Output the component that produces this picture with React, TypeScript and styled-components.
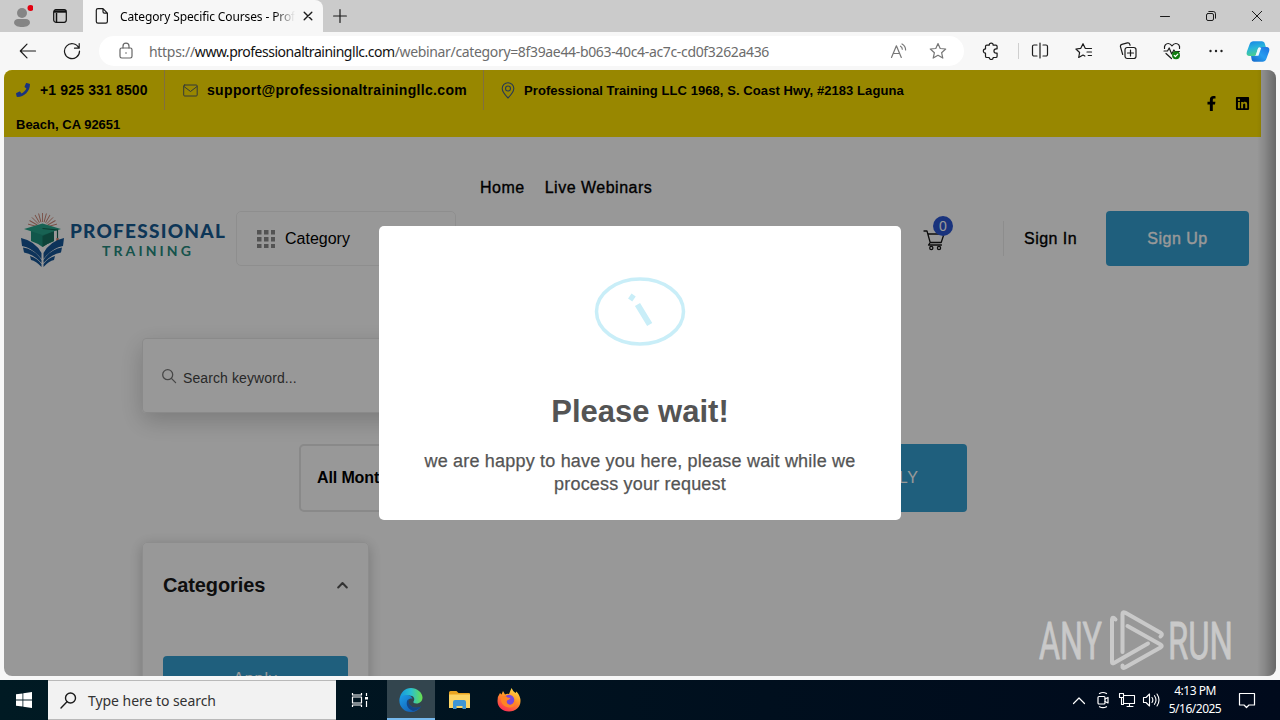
import React from "react";
import styled, { createGlobalStyle } from "styled-components";
import { FaPhone, FaFacebookF, FaLinkedin } from "react-icons/fa";

const uiFont = `"Noto Sans", "Open Sans", sans-serif`;
const pageFont = `"Liberation Sans", Arial, sans-serif`;

const GlobalStyle = createGlobalStyle`
	* {
		box-sizing: border-box;
	}
	body {
		margin: 0;
		overflow: hidden;
		font-family: ${pageFont};
	}
	svg {
		display: block;
		flex: none;
	}
`;

const Desktop = styled.div`
	width: 1280px;
	height: 720px;
	position: relative;
	display: flex;
	flex-direction: column;
	background: #f7f7f7;
	overflow: hidden;
	white-space: nowrap;
`;

type LabelProps = { $size?: number; $spacing?: number; $color?: string; $weight?: number };
const Label = styled.span<LabelProps>`
	font-size: ${({ $size = 16 }) => $size}px;
	letter-spacing: ${({ $spacing = 0 }) => $spacing}px;
	color: ${({ $color = "#000" }) => $color};
	font-weight: ${({ $weight = 400 }) => $weight};
`;
const MediumLabel = styled(Label)`
	-webkit-text-stroke: 0.35px currentColor;
`;

/* ---------- browser chrome ---------- */
const TabStrip = styled.div`
	height: 32px;
	flex: none;
	display: flex;
	padding-left: 3px;
	background: #cbcbcb;
`;
const Cell = styled.div<{ $width: number }>`
	width: ${({ $width }) => $width}px;
	flex: none;
	display: flex;
	align-items: center;
	justify-content: center;
`;
const Tab = styled.div`
	width: 240px;
	margin-left: 4px;
	padding: 0 10px 0 12px;
	display: flex;
	align-items: center;
	background: #f7f7f7;
	border-radius: 0 8px 0 0;
`;
const TabTitle = styled.div`
	width: 175px;
	margin: 0 8px 0 11px;
	font-family: ${uiFont};
	line-height: 20px;
	mask-image: linear-gradient(to right, #000 154px, transparent 175px);
`;
const WindowButtons = styled.div`
	display: flex;
	margin-left: auto;
`;
const Toolbar = styled.div`
	height: 38px;
	flex: none;
	padding-left: 6px;
	display: flex;
`;
const AddressBar = styled.div`
	width: 865px;
	height: 30px;
	margin: 4px 0 0 5px;
	padding: 0 6px 0 13px;
	display: flex;
	align-items: center;
	background: #fff;
	border-radius: 15px;
	font-family: ${uiFont};
`;
const Url = styled.div`
	flex: 1;
	margin-left: 9px;
	line-height: 20px;
`;
const ToolDivider = styled.i`
	width: 1px;
	height: 16px;
	margin: 11px -1px 0 0;
	background: #cfcfcf;
`;

/* ---------- web page ---------- */
const Viewport = styled.div`
	width: 1272px;
	height: 606px;
	flex: none;
	margin-left: 4px;
	position: relative;
	overflow: hidden;
	background: #fefefe;
	border-radius: 8px;
`;
const TopBar = styled.div`
	width: 1257px;
	height: 67px;
	padding-left: 12px;
	display: flex;
	justify-content: space-between;
	background: #fde100;
`;
const ContactRow = styled.div`
	height: 40px;
	display: flex;
	align-items: center;
`;
const Contact = styled.div<{ $width: number; $gap: number; $indent?: number }>`
	width: ${({ $width }) => $width}px;
	height: 40px;
	padding-left: ${({ $indent = 0 }) => $indent}px;
	display: flex;
	align-items: center;
	gap: ${({ $gap }) => $gap}px;
	border-right: 1px solid #d8b96a;

	&:last-child {
		border-right: 0;
	}
`;
const AddressRest = styled.div`
	line-height: 28px;
`;
const Social = styled.div`
	display: flex;
	align-items: center;
	gap: 16px;
	padding-right: 11px;
`;
const Header = styled.header`
	width: 1257px;
	height: 143px;
	margin-top: 30px;
	padding: 0 12px 0 16px;
	display: flex;
	align-items: center;
`;
const Brand = styled.div`
	width: 216px;
	display: flex;
	align-items: center;
`;
const BrandName = styled.div`
	width: 158px;
	margin: 5px 0 0 4px;
	display: flex;
	flex-direction: column;
	align-items: center;
	font-family: Lato, sans-serif;
	line-height: 20px;
`;
const CategoryBox = styled.div`
	width: 220px;
	height: 55px;
	padding-left: 20px;
	display: flex;
	align-items: center;
	gap: 10px;
	border: 1px solid #ededed;
	border-radius: 5px;
`;
const Nav = styled.nav`
	align-self: flex-start;
	margin-left: 24px;
	display: flex;
	gap: 20px;
	line-height: 42px;
`;
const Actions = styled.div`
	margin-left: auto;
	display: flex;
	align-items: center;
`;
const Cart = styled.div`
	width: 81px;
	position: relative;
	border-right: 1px solid #ececec;
	padding: 8px 0 5px;
`;
const CartCount = styled.span`
	position: absolute;
	left: 10px;
	top: -5px;
	width: 20px;
	height: 20px;
	border-radius: 50%;
	background: #2b55d0;
	color: #fff;
	font-size: 14px;
	line-height: 21px;
	text-align: center;
`;
const BlueButton = styled.div<{ $width: number; $height: number }>`
	width: ${({ $width }) => $width}px;
	height: ${({ $height }) => $height}px;
	display: flex;
	align-items: center;
	justify-content: center;
	background: #359fd0;
	border-radius: 4px;
`;
const Main = styled.main`
	padding: 28px 0 0 138px;
`;
const SearchBox = styled.div`
	width: 660px;
	height: 75px;
	padding: 3px 0 0 18px;
	display: flex;
	align-items: center;
	gap: 6px;
	border: 1px solid #e6e6e6;
	border-radius: 4px;
	box-shadow: 0 8px 24px rgba(0, 0, 0, 0.2);
`;
const SearchHint = styled(Label)`
	padding-top: 2px;
`;
const FilterRow = styled.div`
	width: 667px;
	margin: 31px 0 31px 158px;
	display: flex;
	justify-content: space-between;
`;
const MonthSelect = styled.div`
	width: 240px;
	height: 68px;
	margin-left: -1px;
	padding-left: 16px;
	display: flex;
	align-items: center;
	border: 2px solid #e4e4e4;
	border-radius: 5px;
`;
const FilterCard = styled.div`
	width: 227px;
	height: 220px;
	margin-top: -1px;
	padding: 24px 20px 0;
	border: 1px solid #ececec;
	border-radius: 5px;
	box-shadow: 0 3px 14px rgba(0, 0, 0, 0.22);
`;
const CardTitle = styled.div`
	height: 36px;
	margin-bottom: 53px;
	display: flex;
	align-items: center;
	justify-content: space-between;
`;
const ScrollEdge = styled.div`
	position: absolute;
	right: 0;
	top: 0;
	bottom: 0;
	width: 19px;
	background: linear-gradient(to right, transparent, rgba(0, 0, 0, 0.1) 40%, rgba(0, 0, 0, 0.32));
`;
const Backdrop = styled.div`
	position: absolute;
	inset: 0;
	display: flex;
	align-items: center;
	justify-content: center;
	background: rgba(0, 0, 0, 0.4);
`;
const Modal = styled.div`
	width: 522px;
	height: 294px;
	padding-top: 49px;
	display: flex;
	flex-direction: column;
	align-items: center;
	background: #fff;
	border-radius: 5px;
`;
const ModalTitle = styled.h2`
	margin: 47px 0 20px;
	font-size: 31px;
	line-height: 36px;
	letter-spacing: 0;
	color: #545454;
`;
const ModalText = styled.p`
	margin: 0;
	font-size: 18px;
	line-height: 22.5px;
	letter-spacing: 0.19px;
	color: #545454;
	text-align: center;
	-webkit-text-stroke: 0.25px currentColor;
`;

/* ---------- overlay and taskbar ---------- */
const Watermark = styled.div`
	position: absolute;
	left: 1036px;
	top: 606px;
`;
const Taskbar = styled.div`
	height: 40px;
	margin-top: 4px;
	flex: none;
	display: flex;
	background: linear-gradient(to right, #001a23, #000f1e 60%, #000a1c);
`;
const TaskSearch = styled.div`
	width: 288px;
	padding-left: 12px;
	display: flex;
	align-items: center;
	gap: 11px;
	background: #f2f2f2;
	border: 1px solid #b9b9b9;
	border-width: 1px 0;
	font-family: ${uiFont};
`;
const ActiveApp = styled(Cell)`
	margin-left: 3px;
	background: #33454e;
	border-bottom: 2px solid #76b9ed;
	padding-top: 2px;
`;
const Tray = styled.div`
	margin-left: auto;
	display: flex;
	align-items: center;
	padding-right: 17px;
`;
const Clock = styled.div`
	width: 72px;
	margin-left: -4px;
	font-family: ${uiFont};
	font-size: 12px;
	line-height: 18px;
	letter-spacing: -0.5px;
	color: #fff;
	text-align: center;
`;

type IconProps = {
	size?: number;
	width?: number;
	height?: number;
	color?: string;
	stroke?: number;
	children: React.ReactNode;
};
const Icon = ({ size = 18, width, height, color = "#1b1b1b", stroke = 1.2, children }: IconProps) => (
	<svg
		width={width ?? size}
		height={height ?? size}
		viewBox={`0 0 ${width ?? size} ${height ?? size}`}
		fill="none"
		stroke={color}
		strokeWidth={stroke}
		strokeLinecap="round"
		strokeLinejoin="round"
	>
		{children}
	</svg>
);

const BrowserTabs = () => (
	<TabStrip>
		<Cell $width={38}>
			<Icon width={22} height={26}>
				<g stroke="none">
					<circle cx="11" cy="10" r="5" fill="#858585" />
					<path d="M3 20c0-3 2-4 4-4h8c2 0 4 1 4 4-1 3-4 4-8 4s-7-1-8-4z" fill="#858585" />
					<circle cx="19.5" cy="5" r="3" fill="#e3000f" />
				</g>
			</Icon>
		</Cell>
		<Cell $width={38}>
			<Icon width={16} height={16} color="#111">
				<rect x="1.7" y="1.7" width="12.6" height="12.6" rx="2.2" />
				<path d="M2 3.5h12" strokeWidth="2.4" strokeLinecap="butt" />
				<path d="M4.500 5v9" strokeWidth="1.5" strokeLinecap="butt" />
			</Icon>
		</Cell>
		<Tab>
			<Icon width={14} height={18}>
				<path d="M3 1.6h5l4.4 4.6v8.3a1.7 1.7 0 0 1-1.7 1.7H3a1.7 1.7 0 0 1-1.7-1.7V3.3A1.7 1.7 0 0 1 3 1.6zM8 1.8v3a1.4 1.4 0 0 0 1.4 1.4h2.8" />
			</Icon>
			<TabTitle>
				<Label $size={12} $spacing={-0.12}>
					Category Specific Courses - Prof
				</Label>
			</TabTitle>
			<Icon size={10} stroke={1.4}>
				<path d="M1.2 1.2l7.6 7.6M8.8 1.2L1.2 8.8" />
			</Icon>
		</Tab>
		<Cell $width={34}>
			<Icon size={14}>
				<path d="M7 .6v12.8M.6 7h12.8" />
			</Icon>
		</Cell>
		<WindowButtons>
			<Cell $width={46}>
				<Icon size={12}>
					<path d="M1.5 6.5h9" strokeWidth="1" />
				</Icon>
			</Cell>
			<Cell $width={46}>
				<Icon size={12} stroke={1}>
					<rect x="1.5" y="3.5" width="7" height="7" rx="1.5" />
					<path d="M3.8 1.5h4.4a2.3 2.3 0 0 1 2.3 2.3v4.4" />
				</Icon>
			</Cell>
			<Cell $width={46}>
				<Icon size={12} stroke={1}>
					<path d="M1.3 1.3l9.4 9.4M10.7 1.3l-9.4 9.4" />
				</Icon>
			</Cell>
		</WindowButtons>
	</TabStrip>
);

const BrowserToolbar = () => (
	<Toolbar>
		<Cell $width={44}>
			<Icon>
				<path d="M16.5 9H1.5M8 2.2L1.3 9 8 15.8" />
			</Icon>
		</Cell>
		<Cell $width={44}>
			<Icon>
				<path d="M15.8 6A7.5 7.5 0 1 0 16.5 9M16.2 1.5v4.7h-4.7" />
			</Icon>
		</Cell>
		<AddressBar>
			<Cell $width={28}>
				<Icon width={14} height={18} color="#666">
					<rect x="1" y="6" width="12" height="10" rx="1.7" />
					<path d="M4 6V4.2a3 3 0 0 1 6 0V6" />
					<circle cx="7" cy="11" r=".8" fill="#666" stroke="none" />
				</Icon>
			</Cell>
			<Url>
				<Label $size={14} $spacing={-0.3} $color="#6c6c6c">
					https://
				</Label>
				<Label $size={14} $spacing={-0.48} $color="#111">
					www.professionaltrainingllc.com
				</Label>
				<Label $size={14} $spacing={-0.34} $color="#6c6c6c">
					/webinar/category=8f39ae44-b063-40c4-ac7c-cd0f3262a436
				</Label>
			</Url>
			<Cell $width={40}>
				<Icon width={18} height={16} color="#777">
					<path d="M2.5 14.5L7.4 2.8l4.9 11.7M4.2 10.5h6.4M11.5 3.2q1.8 1 1.8 3M13 1q3.600 2 3.600 6" />
				</Icon>
			</Cell>
			<Cell $width={40}>
				<Icon color="#777">
					<path d="M9 1.5l2.2 5 5.5.5-4.1 3.7 1.2 5.4L9 13.3l-4.8 2.8 1.2-5.4L1.3 7l5.5-.5z" />
				</Icon>
			</Cell>
		</AddressBar>
		<Cell $width={54}>
			<Icon>
				<path d="M4.8 3.2h2.4a2 2 0 0 1 4 0h2.6a1.3 1.3 0 0 1 1.3 1.3v2.3h-1a2.1 2.1 0 0 0 0 4.3h1v3.1a1.3 1.3 0 0 1-1.3 1.3h-2.6a2 2 0 0 1-4 0H4.8a1.3 1.3 0 0 1-1.3-1.3v-3a2.1 2.1 0 0 1 0-4.3V4.5a1.3 1.3 0 0 1 1.3-1.3z" />
			</Icon>
		</Cell>
		<ToolDivider />
		<Cell $width={44}>
			<Icon>
				<path d="M6 3H3a1.5 1.5 0 0 0-1.5 1.5v8A1.5 1.5 0 0 0 3 14h3M12 3h3a1.5 1.5 0 0 1 1.5 1.5v8A1.5 1.5 0 0 1 15 14h-3M9 1v15" />
			</Icon>
		</Cell>
		<Cell $width={44}>
			<Icon>
				<path d="M10.6 6.5H16.5M12 10h4.5M13.2 13.5h3.3M10.2 6.2L8 1.7 5.8 6.3.9 7l3.7 3.5-.9 5 4.3-2.4 1.8 1" />
			</Icon>
		</Cell>
		<Cell $width={44}>
			<Icon>
				<rect x="6" y="5.5" width="11" height="11" rx="2.2" />
				<path d="M11.5 8v6M8.5 11h6M3.7 12.5L1.500 4.800a2 2 0 0 1 1.400-2.400l5.500-1.500a2 2 0 0 1 2.400 1.400l.3 1" />
			</Icon>
		</Cell>
		<Cell $width={44}>
			<Icon>
				<path d="M1.5 6.5C1 3.5 3 1.5 5.2 1.5 7 1.5 8 2.5 9 3.8c1-1.3 2-2.3 3.8-2.3 2.4 0 4.4 2.2 3.7 5M1 9h3.5l1.700-3 2.500 6 2.200-4 1 1.500h4.500M3 11.500l5.500 5" />
				<circle cx="13" cy="13.200" r="4" fill="#107c10" stroke="none" />
				<path d="M11.200 13.300l1.200 1.200 2.400-2.400" stroke="#fff" />
			</Icon>
		</Cell>
		<Cell $width={44}>
			<Icon>
				<g fill="#222" stroke="none">
					<circle cx="3.5" cy="9" r="1.2" />
					<circle cx="9" cy="9" r="1.2" />
					<circle cx="14.5" cy="9" r="1.2" />
				</g>
			</Icon>
		</Cell>
		<Cell $width={40}>
			<svg width="24" height="23" viewBox="0 0 26 24">
				<defs>
					<linearGradient id="copilotLeft" x1="0" y1="0" x2="0.3" y2="1">
						<stop offset="0" stopColor="#1683e8" />
						<stop offset=".5" stopColor="#27b3dc" />
						<stop offset="1" stopColor="#4bcf8d" />
					</linearGradient>
					<linearGradient id="copilotRight" x1="1" y1="0" x2="0" y2="1">
						<stop offset="0" stopColor="#1b6fe0" />
						<stop offset=".5" stopColor="#279df0" />
						<stop offset="1" stopColor="#1466c7" />
					</linearGradient>
				</defs>
				<path d="M8 1h9c2 0 3 1 3.500 3l1 3H16c-2 0-3 1-3.500 3l-1.500 5c-.5 1.500-1.500 2-3 2H4c-3 0-4-2-3-5L4 4c.8-2 2-3 4-3z" fill="url(#copilotLeft)" />
				<path d="M18 23H9c-2 0-2.500-1-3-3l-.5-3H9c2 0 3-1 3.500-3L14 9c.5-1.500 1.500-2 3-2h5c3 0 4 2 3 5l-3 8c-.8 2-2 3-4 3z" fill="url(#copilotRight)" />
				<path d="M13.500 8h3l-3 8.500h-3z" fill="#eefaff" />
			</svg>
		</Cell>
	</Toolbar>
);

const rays = [-75, -60, -45, -30, -15, 0, 15, 30, 45, 60, 75];

const BrandLogo = () => (
	<svg width="45" height="56" viewBox="0 0 45 56">
		{rays.map((angle) => (
			<path key={angle} d="M22.5 11V2" stroke="#c98272" strokeWidth=".9" transform={`rotate(${angle} 22.5 17)`} />
		))}
		<path d="M11 19h23v11q-5 2-11.500 6Q17 32 11 30z" fill="#1f917d" />
		<path d="M22.5 25v11q6-4 11.500-6V20z" fill="#17705f" />
		<path d="M4 18l18.500-5.500L41 18l-18.500 6z" fill="#28a48a" />
		<path d="M22.5 17.500L37.500 19v9" stroke="#14604f" strokeWidth="1.2" fill="none" />
		<path d="M36.500 27h2l.5 5h-3z" fill="#cf7f62" />
		<g fill="#165696">
			<path d="M1 27q14 3 20.500 15v6Q13 37 2 35z" />
			<path d="M3 36.500q12 2 18.500 12.500v3Q13 43 4 41.500z" />
			<path d="M10 45q7 2 11.500 8v3Q16 50 11 49z" />
			<path d="M44 27q-14 3-20.500 15v6Q32 37 43 35z" />
			<path d="M42 36.500q-12 2-18.500 12.500v3Q32 43 41 41.500z" />
			<path d="M35 45q-7 2-11.500 8v3Q29 50 34 49z" />
		</g>
	</svg>
);

const WebPage = () => (
	<Viewport>
		<TopBar>
			<div>
				<ContactRow>
					<Contact $width={149} $gap={10}>
						<FaPhone size={14} color="#2b55d0" />
						<Label $size={14} $weight={700} $spacing={0.15}>
							+1 925 331 8500
						</Label>
					</Contact>
					<Contact $width={319} $gap={9} $indent={18}>
						<Icon width={15} height={13} color="#555f60" stroke={1}>
							<rect x=".7" y="1" width="13.5" height="11" rx="1" />
							<path d="M1 2.5l6.5 5 6.500-5" />
						</Icon>
						<Label $size={14} $weight={700} $spacing={0.33}>
							support@professionaltrainingllc.com
						</Label>
					</Contact>
					<Contact $width={440} $gap={9} $indent={17}>
						<Icon width={14} height={17} color="#45608a" stroke={1.1}>
							<path d="M7 16Q1.2 10 1.2 6.5a5.8 5.8 0 0 1 11.6 0Q12.8 10 7 16z" />
							<circle cx="7" cy="6.5" r="2.5" />
						</Icon>
						<Label $size={13} $weight={700} $spacing={0.075}>
							Professional Training LLC 1968, S. Coast Hwy, #2183 Laguna
						</Label>
					</Contact>
				</ContactRow>
				<AddressRest>
					<Label $size={13} $weight={700} $spacing={0}>
						Beach, CA 92651
					</Label>
				</AddressRest>
			</div>
			<Social>
				<FaFacebookF size={15} />
				<FaLinkedin size={15} />
			</Social>
		</TopBar>
		<Header>
			<Brand>
				<BrandLogo />
				<BrandName>
					<Label $size={19} $weight={900} $spacing={1.25} $color="#175a92">
						PROFESSIONAL
					</Label>
					<Label $size={14} $weight={700} $spacing={3.1} $color="#268a7e">
						TRAINING
					</Label>
				</BrandName>
			</Brand>
			<CategoryBox>
				<svg width="18" height="18" viewBox="0 0 18 18" fill="#8a8a8a">
					{[0, 7, 14].map((y) => [0, 7, 14].map((x) => <rect key={`${x}-${y}`} x={x} y={y} width="4.5" height="4.5" />))}
				</svg>
				<Label $size={16}>Category</Label>
			</CategoryBox>
			<Nav>
				<MediumLabel $size={16} $spacing={0.5}>
					Home
				</MediumLabel>
				<MediumLabel $size={16} $spacing={0.5}>
					Live Webinars
				</MediumLabel>
			</Nav>
			<Actions>
				<Cart>
					<Icon width={22} height={22} color="#161616" stroke={1.3}>
						<path d="M1 2h3l3.2 11.5h11L21 5H5.500M7.200 13.500L5.500 16H18.500" />
						<circle cx="8.3" cy="19" r="1.6" />
						<circle cx="16" cy="19" r="1.6" />
					</Icon>
					<CartCount>0</CartCount>
				</Cart>
				<Cell $width={93}>
					<MediumLabel $size={16} $spacing={0.45}>
						Sign In
					</MediumLabel>
				</Cell>
				<Cell $width={9} />
				<BlueButton $width={143} $height={55}>
					<MediumLabel $size={16} $spacing={0.5} $color="#fff">
						Sign Up
					</MediumLabel>
				</BlueButton>
			</Actions>
		</Header>
		<Main>
			<SearchBox>
				<Icon size={16} color="#777" stroke={1.3}>
					<circle cx="6.7" cy="5.700" r="5" />
					<path d="M10.400 9.400l4.200 4.200" />
				</Icon>
				<SearchHint $size={14} $color="#444" $spacing={0.1}>
					Search keyword...
				</SearchHint>
			</SearchBox>
			<FilterRow>
				<MonthSelect>
					<Label $size={16} $weight={700} $spacing={-0.12}>
						All Months
					</Label>
				</MonthSelect>
				<BlueButton $width={151} $height={68}>
					<Label $size={16} $spacing={0.8} $color="#fff">
						APPLY
					</Label>
				</BlueButton>
			</FilterRow>
			<FilterCard>
				<CardTitle>
					<Label $size={20} $weight={700} $spacing={-0.12} $color="#181818">
						Categories
					</Label>
					<Icon width={11} height={8} color="#555" stroke={2}>
						<path d="M1.2 6.500L5.500 2l4.300 4.500" />
					</Icon>
				</CardTitle>
				<BlueButton $width={185} $height={46}>
					<Label $size={16} $spacing={0.9} $color="#fff">
						Apply
					</Label>
				</BlueButton>
			</FilterCard>
		</Main>
		<ScrollEdge />
		<Backdrop>
			<Modal>
				<svg width="94" height="72" viewBox="0 0 94 72" fill="none" stroke="#c9eef8">
					<ellipse cx="47" cy="36.5" rx="43.5" ry="32.5" strokeWidth="3.5" />
					<path d="M36.8 21l4.2 3M44.5 29.5l12.2 20" strokeWidth="6" />
				</svg>
				<ModalTitle>Please wait!</ModalTitle>
				<ModalText>
					we are happy to have you here, please wait while we
					<br />
					process your request
				</ModalText>
			</Modal>
		</Backdrop>
	</Viewport>
);

const WindowsTaskbar = () => (
	<Taskbar>
		<Cell $width={48}>
			<svg width="16" height="16" viewBox="0 0 16 16" fill="#fff">
				<path d="M0 2.3L6.5 1.4v6.2H0zM7.3 1.3L16 0v7.6H7.3zM0 8.4h6.5v6.2L0 13.7zM7.3 8.4H16V16l-8.7-1.3z" />
			</svg>
		</Cell>
		<TaskSearch>
			<Icon size={17} stroke={1.4}>
				<circle cx="10.5" cy="6" r="5" />
				<path d="M7 9.8L1 16" />
			</Icon>
			<Label $size={14} $color="#333" $spacing={-0.05}>
				Type here to search
			</Label>
		</TaskSearch>
		<Cell $width={48}>
			<Icon width={18} height={16} color="#fff" stroke={1.2}>
				<path d="M1.5 1v2h9V1M1.5 15v-2h9v2M1.5 5h9v6h-9zM15.5 1v3M15.5 9v6" strokeLinecap="butt" />
				<path d="M14 5h3v2.5h-3z" fill="#fff" stroke="none" />
			</Icon>
		</Cell>
		<ActiveApp $width={48}>
			<svg width="24" height="24" viewBox="0 0 24 24">
				<defs>
					<linearGradient id="edgeTop" x1="0" y1=".5" x2="1" y2=".5">
						<stop offset="0" stopColor="#1496dc" />
						<stop offset=".5" stopColor="#2bc0cf" />
						<stop offset="1" stopColor="#69e04c" />
					</linearGradient>
					<linearGradient id="edgeBody" x1="0" y1="0" x2="1" y2="1">
						<stop offset="0" stopColor="#1b9de8" />
						<stop offset="1" stopColor="#1251a8" />
					</linearGradient>
				</defs>
				<path d="M.5 11C1.500 4.500 6 0 12 0s11.500 4.500 11.500 9.500c0 3.500-2.500 6-6 6-2.500 0-3.500-1-3-2 2-3 0-6-4-6-4.500 0-8 1-10 3.500z" fill="url(#edgeTop)" />
				<path d="M.5 11c1.500-3 4.500-4.500 7.500-4 3 .3 5 2 5.500 4-4-2-6 3-3 6 3 3.500 8 3.500 11.500 1.500-2 3.500-5.500 5.500-10 5.500C5 24-.500 18 .500 11z" fill="url(#edgeBody)" />
				<path d="M8.500 12c-2 4 0 9 5.500 11 3-.5 6-2 8-4.500-4 2-9 1.500-11.500-2-1.500-2-1.300-4-.5-5.500z" fill="#144687" />
			</svg>
		</ActiveApp>
		<Cell $width={49}>
			<svg width="22" height="20" viewBox="0 0 22 20">
				<path d="M0 2.500Q0 1 1.500 1h6L9.500 3H20q1 0 1 1v4H0z" fill="#e9a421" />
				<path d="M0 4.500h21V18H0z" fill="#fcd465" />
				<path d="M4 19v-7q0-2 2-2h9q2 0 2 2v7h-3.500v-3h-6v3z" fill="#3f95d3" />
			</svg>
		</Cell>
		<Cell $width={49}>
			<svg width="24" height="24" viewBox="0 0 24 24">
				<defs>
					<linearGradient id="foxFlame" x1=".8" y1="0" x2=".3" y2="1">
						<stop offset="0" stopColor="#ffe04a" />
						<stop offset=".45" stopColor="#ff9526" />
						<stop offset="1" stopColor="#fb2c55" />
					</linearGradient>
				</defs>
				<path d="M3 5l1.500 1.500L6 3l2 3.500q2-1 4-.5L14.500 0q1.500 3.500 4 5l1-1.500Q23.500 8 23.500 13c0 6-5 10.500-11.500 10.500S.500 19 .500 13Q.500 8 3 5z" fill="url(#foxFlame)" />
				<circle cx="12" cy="12" r="5.3" fill="#7748dc" />
				<path d="M4 9q4-2 6.500.5l3 .5q-1 2-3.500 2.500-1 3 2 4c3 1 6-1.500 5.500-5.500 2 3 1 8-4 8.500C7 20 3 15 4 9z" fill="#ff8424" />
			</svg>
		</Cell>
		<Tray>
			<Cell $width={24}>
				<Icon width={14} height={9} color="#fff">
					<path d="M1.5 7.5L7 2l5.5 5.5" />
				</Icon>
			</Cell>
			<Cell $width={24}>
				<Icon width={14} height={18} color="#fff">
					<rect x="2" y="5.5" width="7" height="7.5" rx="1" />
					<path d="M9 8l3-1.500V12L9 10.500M3.500 2.500q3.500-2 7 0M3.500 15.700q3.500 2 7 0" />
				</Icon>
			</Cell>
			<Cell $width={24}>
				<Icon width={18} height={16} color="#fff" stroke={1.1}>
					<path d="M6 3.500h10.500v8H5.500V6M9 14.500h6M11.500 11.500v3M1.500 1.500h4v4h-4zM3.500 5.500v7h2" />
				</Icon>
			</Cell>
			<Cell $width={24}>
				<Icon width={18} height={16} color="#fff" stroke={1.1}>
					<path d="M1.500 5.500h2.500L7.500 2v12L4 10.500H1.500zM10 5.500q1.700 2.500 0 5M12.500 3.700q3 4.300 0 8.600M15 2q4 6 0 12" />
				</Icon>
			</Cell>
			<Clock>
				4:13 PM
				<br />
				5/16/2025
			</Clock>
			<Cell $width={32}>
				<Icon width={18} height={18} color="#fff">
					<path d="M1.500 2.500h15v11.500H11l-2.500 2.500L6 14H1.500z" />
				</Icon>
			</Cell>
		</Tray>
	</Taskbar>
);

const AnyRunMark = () => (
	<Watermark>
		<svg width="210" height="68" viewBox="0 0 210 68" fill="none" stroke="#c9c9c9" strokeWidth="4" strokeLinecap="round" strokeLinejoin="round">
			<g fill="#c9c9c9" stroke="#c9c9c9" strokeWidth=".8" fontFamily="Roboto, sans-serif" fontSize="51">
				<text x="3" y="53" textLength="63" lengthAdjust="spacingAndGlyphs">
					ANY
				</text>
				<text x="132" y="53" textLength="65" lengthAdjust="spacingAndGlyphs">
					RUN
				</text>
			</g>
			<path d="M79.500 13.500q-3-3.500-3.500 0V56q0 2 2 1l34-19.500" />
			<path d="M86.500 46V8q0-2.500 2.500-1.500l36 20.500q2 1.500-.5 3.500" />
			<path d="M91.500 20l33 18.500q2.500 1.500 0 3L89 61.500q-3 1.500-2.500-2" />
		</svg>
	</Watermark>
);

const App = () => (
	<Desktop>
		<GlobalStyle />
		<BrowserTabs />
		<BrowserToolbar />
		<WebPage />
		<WindowsTaskbar />
		<AnyRunMark />
	</Desktop>
);

export default App;
